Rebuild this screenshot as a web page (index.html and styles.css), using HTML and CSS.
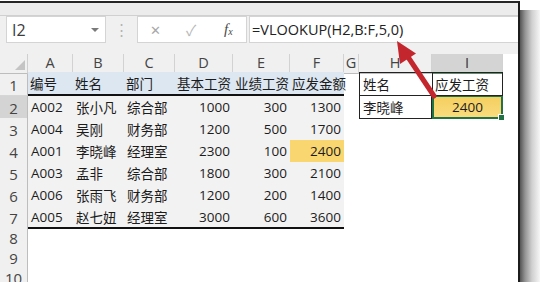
FILE: index.html
```html
<!DOCTYPE html>
<html lang="zh-CN">
<head>
<meta charset="utf-8">
<title>VLOOKUP</title>
<link rel="stylesheet" href="styles.css">
</head>
<body>
<div class="window">
	<div class="ribbon"></div>
	<div class="formula-bar">
		<div class="name-box"><span class="ref">I2</span><span class="caret"></span></div>
		<div class="grip">&#8942;</div>
		<div class="fx-box">
			<span class="cancel">&#10005;</span>
			<span class="enter">&#10003;</span>
			<span class="fx">f<sub>x</sub></span>
		</div>
		<div class="formula">=VLOOKUP(H2,B:F,5,0)</div>
	</div>

	<div class="sheet">
		<div class="row head">
			<div class="corner"><span class="tri"></span></div>
			<div class="col">A</div><div class="col">B</div><div class="col">C</div>
			<div class="col">D</div><div class="col">E</div><div class="col">F</div>
			<div class="col">G</div><div class="col">H</div><div class="col sel">I</div>
			<div class="blank"></div>
		</div>
		<div class="row r1">
			<div class="rh">1</div>
			<div class="c th">编号</div><div class="c th">姓名</div><div class="c th">部门</div>
			<div class="c th">基本工资</div><div class="c th">业绩工资</div><div class="c th">应发金额</div>
			<div class="c"></div>
			<div class="c box h1">姓名</div><div class="c box i1">应发工资</div>
			<div class="c"></div>
		</div>
		<div class="row">
			<div class="rh sel">2</div>
			<div class="c td">A002</div><div class="c td">张小凡</div><div class="c td">综合部</div>
			<div class="c td num">1000</div><div class="c td num">300</div><div class="c td num">1300</div>
			<div class="c"></div>
			<div class="c box h2">李晓峰</div><div class="c i2">2400<span class="handle"></span></div>
			<div class="c"></div>
		</div>
		<div class="row">
			<div class="rh">3</div>
			<div class="c td">A004</div><div class="c td">吴刚</div><div class="c td">财务部</div>
			<div class="c td num">1200</div><div class="c td num">500</div><div class="c td num">1700</div>
			<div class="c"></div><div class="c"></div><div class="c"></div><div class="c"></div>
		</div>
		<div class="row">
			<div class="rh">4</div>
			<div class="c td">A001</div><div class="c td">李晓峰</div><div class="c td">经理室</div>
			<div class="c td num">2300</div><div class="c td num">100</div><div class="c td num hit">2400</div>
			<div class="c"></div><div class="c"></div><div class="c"></div><div class="c"></div>
		</div>
		<div class="row">
			<div class="rh">5</div>
			<div class="c td">A003</div><div class="c td">孟非</div><div class="c td">综合部</div>
			<div class="c td num">1800</div><div class="c td num">300</div><div class="c td num">2100</div>
			<div class="c"></div><div class="c"></div><div class="c"></div><div class="c"></div>
		</div>
		<div class="row">
			<div class="rh">6</div>
			<div class="c td">A006</div><div class="c td">张雨飞</div><div class="c td">财务部</div>
			<div class="c td num">1200</div><div class="c td num">200</div><div class="c td num">1400</div>
			<div class="c"></div><div class="c"></div><div class="c"></div><div class="c"></div>
		</div>
		<div class="row r7">
			<div class="rh">7</div>
			<div class="c td">A005</div><div class="c td">赵七妞</div><div class="c td">经理室</div>
			<div class="c td num">3000</div><div class="c td num">600</div><div class="c td num">3600</div>
			<div class="c"></div><div class="c"></div><div class="c"></div><div class="c"></div>
		</div>
		<div class="row short"><div class="rh">8</div></div>
		<div class="row short"><div class="rh">9</div></div>
		<div class="row short"><div class="rh">10</div></div>
	</div>
</div>
<div class="shadow"></div>

<svg class="arrow" width="540" height="282" viewBox="0 0 540 282">
	<line x1="434" y1="96" x2="408" y2="57" stroke="#c3262c" stroke-width="5" stroke-linecap="round" />
	<polygon points="397,41 416,53.5 400,64" fill="#c3262c" />
</svg>
</body>
</html>
```
FILE: styles.css
```css
body {
	margin: 0;
	height: 282px;
	overflow: hidden;
	display: flex;
	background: #fff;
	font-family: "Open Sans", "Noto Sans CJK SC", sans-serif;
	color: #1c1c1c;
}

.window {
	width: 518px;
	margin-top: 1px;
	border-top: 2px solid #262626;
	border-right: 2px solid #1c1c1c;
	background: #fff;
	overflow: hidden;
}

.shadow {
	flex: 1;
	margin-top: 10px;
	background: linear-gradient(to right, #555, #939393 25%, #d0d0d0 60%, #f6f6f6);
}

.ribbon {
	height: 12px;
	background: #ececec;
	border-bottom: 1px solid #d0d0d0;
}

/* formula bar */
.formula-bar {
	display: flex;
	height: 27px;
	padding-bottom: 11px;
	background: #f0f0f0;
}

.name-box {
	width: 100px;
	margin-left: 6px;
	box-sizing: border-box;
	border: 1px solid #d4d4d4;
	background: #fff;
	display: flex;
	align-items: center;
	justify-content: space-between;
	padding: 0 6px 0 5px;
}

.ref {
	font-size: 16px;
	color: #3c3c3c;
}

.caret {
	border-left: 4px solid transparent;
	border-right: 4px solid transparent;
	border-top: 4px solid #7a7a7a;
}

.grip {
	width: 31px;
	text-align: center;
	line-height: 27px;
	font-size: 15px;
	color: #b4b4b4;
}

.fx-box {
	width: 110px;
	box-sizing: border-box;
	border: 1px solid #d4d4d4;
	background: #fff;
	display: flex;
	align-items: center;
	padding-left: 12px;
}

.cancel {
	font-size: 13px;
	color: #a8a8a8;
	width: 36px;
}

.enter {
	font-size: 15px;
	color: #b8b8b8;
	width: 38px;
}

.fx {
	font-family: "Liberation Serif", serif;
	font-style: italic;
	font-size: 15px;
	color: #4a4a4a;
}

.fx sub {
	font-size: 10px;
	vertical-align: -1px;
}

.formula {
	flex: 1;
	margin-left: 2px;
	box-sizing: border-box;
	border: 1px solid #d4d4d4;
	border-right: 0;
	background: #fff;
	padding-left: 2px;
	font-size: 14.5px;
	line-height: 25px;
	color: #222;
}

/* sheet */
.row {
	display: grid;
	grid-template-columns: 28px 45px 51px 51px 58px 57px 54px 15px 73px 71px 1fr;
	height: 22px;
	font-size: 13.5px;
}

.row.head {
	height: 18px;
}

.row.r1 {
	height: 24px;
}

.row.short {
	height: 20px;
}

.corner {
	background: #f0f0f0;
	border-right: 1px solid #cfcfcf;
	border-bottom: 1px solid #bdbdbd;
	position: relative;
}

.tri {
	position: absolute;
	right: 2px;
	bottom: 3px;
	border-left: 10px solid transparent;
	border-bottom: 10px solid #c4c4c4;
}

.col {
	background: #f0f0f0;
	border-right: 1px solid #d2d2d2;
	border-bottom: 1px solid #bdbdbd;
	text-align: center;
	font-size: 14.5px;
	line-height: 18px;
	color: #444;
}

.col.sel {
	background: #d4d4d4;
	border-bottom: 2px solid #5f8f6c;
	color: #333;
}

.blank {
	background: #fff;
}

.rh {
	background: #f0f0f0;
	border-right: 1px solid #bdbdbd;
	border-bottom: 1px solid #d6d6d6;
	font-size: 15px;
	color: #444;
	display: flex;
	align-items: center;
	justify-content: center;
	padding-top: 2px;
	box-sizing: border-box;
}

.short .rh {
	padding-top: 0;
}

.rh.sel {
	background: #d4d4d4;
}

.c {
	display: flex;
	align-items: center;
	padding: 0 3px;
	white-space: nowrap;
	overflow: hidden;
	box-sizing: border-box;
}

.th {
	background: #dde7f1;
	border-bottom: 2px solid #111;
	padding: 0 0 0 2px;
	overflow: visible;
}

.td {
	background: #f2f2f2;
	border-bottom: 1px solid #fafafa;
}

.r7 .td {
	border-bottom: 2px solid #111;
}

.num {
	justify-content: flex-end;
}

.hit {
	background: #f9d66f;
}

/* lookup cells H1:I2 */
.box {
	border: 1px solid #222;
}

.h1 {
	border-right: 0;
}

.i1 {
	padding-left: 2px;
}

.h2 {
	border-top: 0;
}

.i2 {
	position: relative;
	overflow: visible;
	justify-content: center;
	background: linear-gradient(#f5cf5f, #f9dc7e);
	border: 2px solid #217346;
	border-top-width: 1px;
}

.handle {
	position: absolute;
	right: -4px;
	bottom: -4px;
	width: 5px;
	height: 5px;
	background: #217346;
	border: 1px solid #fff;
}

.arrow {
	position: absolute;
	left: 0;
	top: 0;
	pointer-events: none;
}
```
